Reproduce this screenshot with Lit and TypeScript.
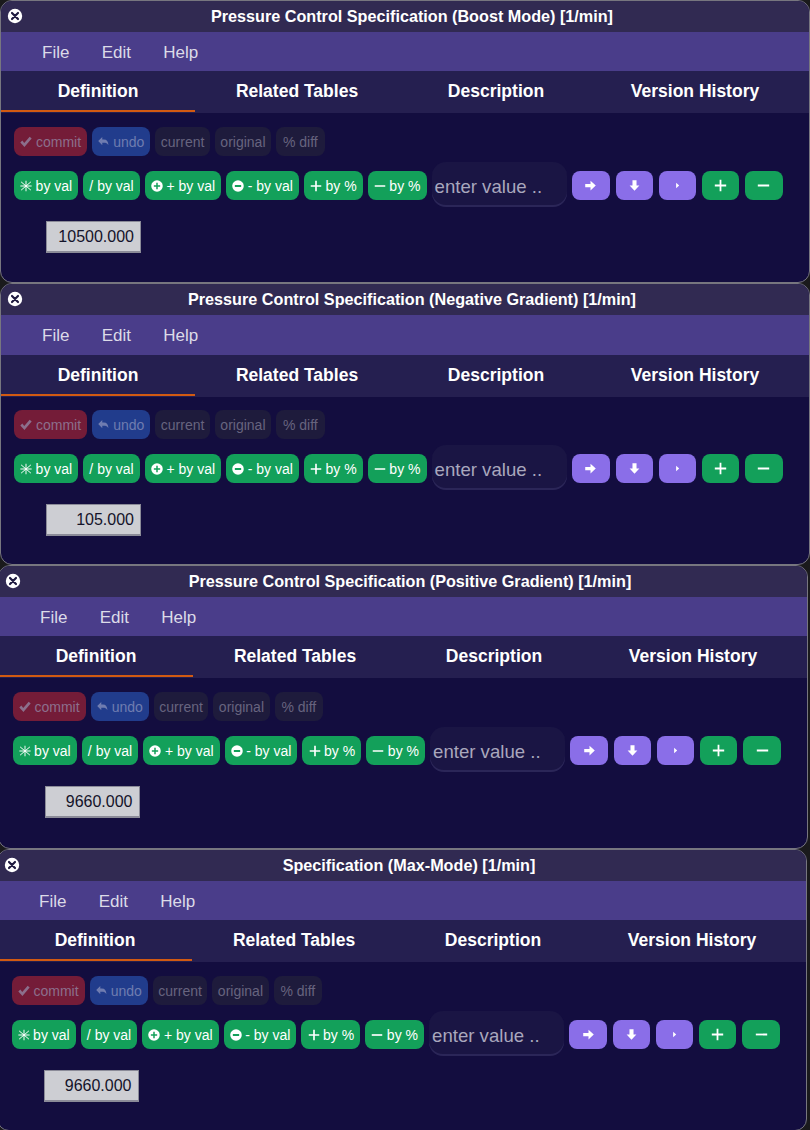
import { LitElement, html, css, svg } from "lit";
import { customElement } from "lit/decorators.js";

const ICONS: Record<string, unknown> = {
  check: svg`<path d="M1.5 8.5 L3.8 6.4 L6 9 L12.2 2 L14.5 4 L6.2 13.6 Z" fill="currentColor"/>`,
  undo: svg`<path d="M6.5 2.5 V5.5 H8.5 C12 5.5 14 8 14 12.5 C12.8 10.2 11 9.5 8.5 9.5 H6.5 V12.5 L1.5 7.5 Z" fill="currentColor"/>`,
  star: svg`<path d="M8 1 V15 M1.5 2.5 L14.5 13.5 M14.5 2.5 L1.5 13.5 M0.5 8 H15.5" stroke="currentColor" stroke-width="1.3" fill="none"/>`,
  plusc: svg`<circle cx="8" cy="8" r="7.7" fill="currentColor"/><path d="M8 3.8 V12.2 M3.8 8 H12.2" stroke="#13a05a" stroke-width="2"/>`,
  minusc: svg`<circle cx="8" cy="8" r="7.7" fill="currentColor"/><path d="M3.8 8 H12.2" stroke="#13a05a" stroke-width="2.6"/>`,
  plus: svg`<path d="M8 1 V15 M1 8 H15" stroke="currentColor" stroke-width="2.2"/>`,
  minus: svg`<path d="M1 8 H15" stroke="currentColor" stroke-width="2.2"/>`,
  right: svg`<path d="M1.5 6 H8 V2 L14.5 8 L8 14 V10 H1.5 Z" fill="currentColor"/>`,
  down: svg`<path d="M5.5 1.5 V8 H2 L8 14.5 L14 8 H10.5 V1.5 Z" fill="currentColor"/>`,
  caret: svg`<path d="M5.5 3 L11 8 L5.5 13 Z" fill="currentColor"/>`,
  close: svg`<circle cx="8" cy="8" r="7.2" fill="currentColor"/><path d="M5 5 L11 11 M11 5 L5 11" stroke="#1f1a40" stroke-width="2.2" stroke-linecap="round"/>`,
};

const icon = (name: string, size = 14) =>
  html`<svg class="ic" width=${size} height=${size} viewBox="0 0 16 16" aria-hidden="true">${ICONS[name]}</svg>`;

const WINDOWS = [
  { title: "Pressure Control Specification (Boost Mode) [1/min]", value: "10500.000", x: 0, h: 283, menu: 39, top: 14, left: 13 },
  { title: "Pressure Control Specification (Negative Gradient) [1/min]", value: "105.000", x: 0, h: 282, menu: 40, top: 13, left: 13 },
  { title: "Pressure Control Specification (Positive Gradient) [1/min]", value: "9660.000", x: -2, h: 284, menu: 39, top: 14, left: 13.5 },
  { title: "Specification (Max-Mode) [1/min]", value: "9660.000", x: -3, h: 282, menu: 39, top: 14, left: 13.5 },
];

const TABS = ["Definition", "Related Tables", "Description", "Version History"];

@customElement("app-root")
export class AppRoot extends LitElement {
  static styles = css`
    :host {
      display: block;
      width: 810px;
      height: 1130px;
      overflow: hidden;
      background: #1a1a1c;
      font-family: "Liberation Sans", Arial, sans-serif;
    }
    .win {
      box-sizing: border-box;
      width: 810px;
      display: flex;
      flex-direction: column;
      border: 1px solid #77767f;
      border-radius: 12px;
      overflow: hidden;
      background: #130d3f;
    }
    .title {
      box-sizing: border-box;
      height: 31px;
      flex: none;
      position: relative;
      display: flex;
      align-items: center;
      justify-content: center;
      padding-left: 14px;
      background: #312a52;
      color: #fff;
      font-weight: 700;
      font-size: 16.2px;
    }
    .close {
      position: absolute;
      left: 6px;
      top: 7px;
      display: flex;
      color: #fff;
    }
    .menu {
      box-sizing: border-box;
      flex: none;
      display: flex;
      align-items: center;
      gap: 32.3px;
      padding: 2px 0 0 41px;
      background: #4a3d8a;
      color: #dcdbe8;
      font-size: 17px;
    }
    .tabs {
      height: 42px;
      flex: none;
      box-sizing: border-box;
      display: grid;
      grid-template-columns: repeat(4, 194px);
      column-gap: 5px;
      background: #251f50;
    }
    .tab {
      box-sizing: border-box;
      display: flex;
      align-items: center;
      justify-content: center;
      color: #fff;
      font-weight: 700;
      font-size: 17.5px;
      padding-bottom: 2px;
      height: 42px;
    }
    .tab.on {
      border-bottom: 2px solid #d25a12;
      padding: 1px 0 0;
      height: 41px;
    }
    .body {
      flex: 1;
    }
    .row {
      display: flex;
      align-items: center;
    }
    .row1 {
      gap: 5px;
    }
    .row2 {
      gap: 5px;
      margin-top: 6px;
    }
    .btn {
      box-sizing: border-box;
      height: 29px;
      display: flex;
      align-items: center;
      gap: 3.5px;
      padding: 0 6.1px;
      border-radius: 8px;
      font-size: 14px;
      white-space: nowrap;
    }
    .row1 .btn {
      padding: 0 5.5px;
      gap: 3px;
    }
    .row1 .lead {
      padding: 0 6px 0 5px;
    }
    .row1 .wide {
      padding: 0 7px;
    }
    .ic {
      flex: none;
      display: block;
    }
    .commit {
      background: #741c38;
      color: #8c6f8c;
    }
    .undo {
      background: #213c8c;
      color: #6f7cb0;
    }
    .dim {
      background: #1e1b3c;
      color: #67647f;
    }
    .go {
      background: #13a05a;
      color: #fff;
    }
    .pu {
      background: #8a6ee8;
      color: #fff;
    }
    .tools {
      display: flex;
      gap: 6px;
    }
    .sq {
      justify-content: center;
      padding: 0;
    }
    .w38 {
      width: 38px;
    }
    .w37 {
      width: 37px;
    }
    .input {
      box-sizing: border-box;
      width: 135px;
      height: 45px;
      margin-bottom: 2px;
      display: flex;
      align-items: center;
      padding: 4px 0 0 3px;
      border-radius: 14px;
      background: #1a1544;
      color: #a9a7bd;
      font-size: 18.6px;
      box-shadow: inset 0 -2px 0 #2b2658;
    }
    .cell {
      box-sizing: border-box;
      width: 95px;
      height: 32px;
      margin: 12px 0 0 32px;
      display: flex;
      align-items: center;
      justify-content: flex-end;
      padding-right: 6px;
      background: #cdced3;
      border: 1px solid #8b8b98;
      border-bottom-width: 2px;
      color: #14132a;
      font-size: 16px;
    }
  `;

  private renderWindow(w: (typeof WINDOWS)[number]) {
    return html`
      <section class="win" style="margin-left:${w.x}px;height:${w.h}px">
        <header class="title">
          <span class="close">${icon("close", 16)}</span>
          <span>${w.title}</span>
        </header>
        <nav class="menu" style="height:${w.menu}px"><span>File</span><span>Edit</span><span>Help</span></nav>
        <div class="tabs">
          ${TABS.map((t, i) => html`<div class="tab ${i === 0 ? "on" : ""}">${t}</div>`)}
        </div>
        <div class="body" style="padding:${w.top}px 0 0 ${w.left}px">
          <div class="row row1">
            <div class="btn commit lead">${icon("check")}commit</div>
            <div class="btn undo lead">${icon("undo", 13)}undo</div>
            <div class="btn dim">current</div>
            <div class="btn dim">original</div>
            <div class="btn dim wide">% diff</div>
          </div>
          <div class="row row2">
            <div class="btn go">${icon("star", 12)}by val</div>
            <div class="btn go">/ by val</div>
            <div class="btn go">${icon("plusc", 12)}+ by val</div>
            <div class="btn go">${icon("minusc", 12)}- by val</div>
            <div class="btn go">${icon("plus", 12)}by %</div>
            <div class="btn go">${icon("minus", 12)}by %</div>
            <div class="input">enter value ..</div>
            <div class="tools">
              <div class="btn pu sq w38">${icon("right", 13)}</div>
              <div class="btn pu sq w37">${icon("down", 13)}</div>
              <div class="btn pu sq w37">${icon("caret", 9)}</div>
              <div class="btn go sq w37">${icon("plus", 13)}</div>
              <div class="btn go sq w38">${icon("minus", 13)}</div>
            </div>
          </div>
          <div class="cell">${w.value}</div>
        </div>
      </section>
    `;
  }

  render() {
    return html`${WINDOWS.map((w) => this.renderWindow(w))}`;
  }
}
